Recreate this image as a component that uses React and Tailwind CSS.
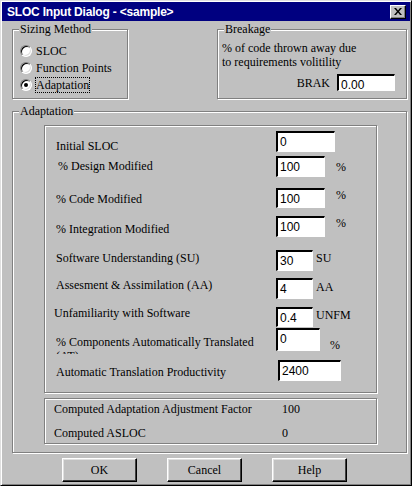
import React from 'react'

const serif = "font-['Liberation_Serif','Times_New_Roman',serif] text-[12px] leading-[14px] text-black"
const sunken = "bg-white border-t-2 border-l-2 border-t-black border-l-black border-r border-b border-r-white border-b-white font-['Liberation_Sans',sans-serif] text-[12px] leading-[14px] pl-[2px] pt-[2px] text-black"
const etched = "border border-[#808080] shadow-[inset_1px_1px_0_#fff,1px_1px_0_#fff]"

function Radio({ label, checked }) {
  return (
    <div className="flex items-center h-[17px]">
      <span className="w-[12px] h-[12px] rounded-full bg-white border border-t-[#808080] border-l-[#808080] border-r-white border-b-white shadow-[inset_1px_1px_0_#000,inset_-1px_-1px_0_#dfdfdf] flex items-center justify-center">
        {checked && <span className="w-[4px] h-[4px] rounded-full bg-black" />}
      </span>
      <span className={`${serif} ml-[3px] border ${checked ? 'border-dotted border-black' : 'border-transparent'}`}>
        {label}
      </span>
    </div>
  )
}

function Row({ mt, h, w, label, labelMt, labelShift = 0, unit, unitMl, unitMt, value, inputMl = 0, clip }) {
  return (
    <div className="flex items-start" style={{ marginTop: mt, height: h }}>
      <div className="w-[220px] shrink-0">
        <div
          className={`${serif} ${clip ? 'w-[210px] h-[19px] overflow-hidden' : 'whitespace-nowrap'}`}
          style={{ marginTop: labelMt, marginLeft: labelShift }}
        >
          {label}
        </div>
      </div>
      <div className={sunken} style={{ width: w, height: h, marginLeft: inputMl }}>{value}</div>
      {unit && (
        <div className={serif} style={{ marginLeft: unitMl, marginTop: unitMt }}>{unit}</div>
      )}
    </div>
  )
}

export default function App() {
  return (
    <div className="w-[412px] h-[486px] bg-[#c0c0c0] border border-t-[#dfdfdf] border-l-[#dfdfdf] border-r-black border-b-black shadow-[inset_1px_1px_0_#fff,inset_-1px_-1px_0_#808080] p-[1px] flex flex-col overflow-hidden">
      {/* title bar */}
      <div className="h-[19px] bg-[#000080] flex items-center pl-[5px] pr-[4px]">
        <span className="font-['Liberation_Sans',sans-serif] font-bold text-[12px] text-white tracking-[-0.2px] whitespace-nowrap">
          SLOC Input Dialog - &lt;sample&gt;
        </span>
        <button className="ml-auto w-[16px] h-[14px] bg-[#c0c0c0] border border-t-white border-l-white border-r-black border-b-black shadow-[inset_-1px_-1px_0_#808080] flex items-center justify-center">
          <svg width="8" height="7" viewBox="0 0 8 7">
            <path d="M0 0h2l2 2.5L6 0h2L5 3.5 8 7H6L4 4.5 2 7H0l3-3.5z" fill="#000" />
          </svg>
        </button>
      </div>

      <div className="flex flex-col pl-[10px] pr-[3px]">
        {/* top groups */}
        <div className="flex mt-[8px] h-[70px]">
          <div className={`relative w-[116px] h-[70px] ${etched} pl-[7px] pt-[12px]`}>
            <span className={`${serif} absolute left-[6px] top-[-8px] bg-[#c0c0c0] px-[1px]`}>Sizing Method</span>
            <Radio label="SLOC" />
            <Radio label="Function Points" />
            <Radio label="Adaptation" checked />
          </div>
          <div className={`relative ml-auto w-[190px] h-[70px] ${etched} pl-[4px] pt-[11px] pr-[11px]`}>
            <span className={`${serif} absolute left-[6px] top-[-8px] bg-[#c0c0c0] px-[1px]`}>Breakage</span>
            <div className={serif}>% of code thrown away due</div>
            <div className={serif}>to requirements volitility</div>
            <div className="flex items-center justify-end mt-[5px]">
              <span className={`${serif} mr-[7px]`}>BRAK</span>
              <div className={`${sunken} w-[58px] h-[17px] pt-[1px]`}>0.00</div>
            </div>
          </div>
        </div>

        {/* adaptation group */}
        <div className={`relative mt-[12px] h-[342px] ${etched} pl-[31px] pr-[29px] pt-[13px]`}>
          <span className={`${serif} absolute left-[6px] top-[-8px] bg-[#c0c0c0] px-[1px]`}>Adaptation</span>

          <div className={`h-[268px] ${etched} pl-[11px] pt-[5px] flex flex-col`}>
            <Row mt={0} h={21} w={59} label="Initial SLOC" labelMt={8} value="0" />
            <Row mt={4} h={21} w={49} label="% Design Modified" labelMt={3} labelShift={2} value="100" unit="%" unitMl={11} unitMt={4} />
            <Row mt={11} h={20} w={49} label="% Code Modified" labelMt={4} value="100" unit="%" unitMl={11} unitMt={0} />
            <Row mt={8} h={21} w={49} label="% Integration Modified" labelMt={6} value="100" unit="%" unitMl={11} unitMt={0} />
            <Row mt={13} h={21} w={37} label="Software Understanding (SU)" labelMt={1} value="30" unit="SU" unitMl={3} unitMt={1} />
            <Row mt={7} h={21} w={37} label="Assesment & Assimilation (AA)" labelMt={0} value="4" unit="AA" unitMl={3} unitMt={2} />
            <Row mt={8} h={20} w={37} label="Unfamiliarity with Software" labelMt={-1} labelShift={-2} value="0.4" unit="UNFM" unitMl={3} unitMt={1} />
            <Row mt={1} h={23} w={44} label="% Components Automatically Translated (AT)" labelMt={7} clip value="0" unit="%" unitMl={10} unitMt={10} />
            <Row mt={9} h={21} w={63} label="Automatic Translation Productivity" labelMt={5} inputMl={2} value="2400" />
          </div>

          <div className={`mt-[5px] h-[46px] ${etched} pl-[9px] pt-[3px] flex flex-col gap-[10px]`}>
            <div className="flex">
              <span className={`${serif} w-[228px]`}>Computed Adaptation Adjustment Factor</span>
              <span className={serif}>100</span>
            </div>
            <div className="flex">
              <span className={`${serif} w-[228px]`}>Computed ASLOC</span>
              <span className={serif}>0</span>
            </div>
          </div>
        </div>

        {/* buttons */}
        <div className="flex mt-[5px] pl-[50px] gap-[30px]">
          {['OK', 'Cancel', 'Help'].map((b) => (
            <button
              key={b}
              className={`w-[75px] h-[24px] bg-[#c0c0c0] border border-t-white border-l-white border-r-black border-b-black shadow-[inset_-1px_-1px_0_#404040,inset_1px_1px_0_#dfdfdf] ${serif} flex items-center justify-center`}
            >
              {b}
            </button>
          ))}
        </div>
      </div>
    </div>
  )
}
